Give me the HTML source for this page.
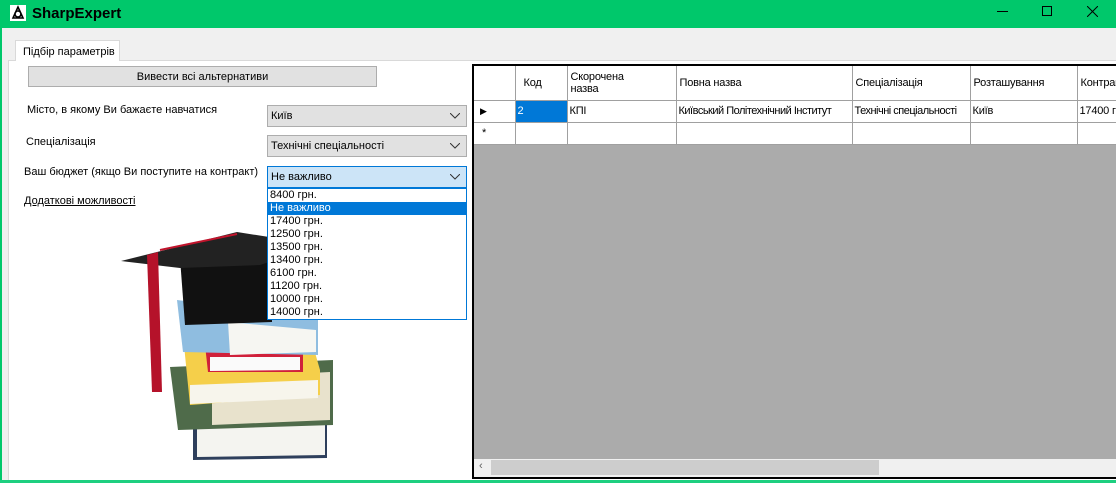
<!DOCTYPE html>
<html><head><meta charset="utf-8"><style>
*{margin:0;padding:0;box-sizing:border-box}
body{width:1116px;height:483px;overflow:hidden;background:#f0f0f0;font-family:"Liberation Sans","DejaVu Sans",sans-serif;font-size:11px;color:#000;position:relative}
.abs{position:absolute;white-space:nowrap}
.title{left:0;top:0;width:1116px;height:28px;background:#00c86b}
.combo{position:absolute;left:267px;width:200px;height:22px;background:#e1e1e1;border:1px solid #adadad;padding:4px 0 0 3px}
.combo svg{position:absolute;right:6px;top:7px}
.grid td{border-right:1px solid #a0a0a0;border-bottom:1px solid #a0a0a0;padding:0 3px;background:#fff;white-space:nowrap;overflow:hidden;vertical-align:middle;font-size:11px;letter-spacing:-0.2px}
.dd div{height:13px;line-height:13px;padding-left:2px}
</style></head><body>
<div class="abs title"></div>
<svg class="abs" style="left:10px;top:5px" width="16" height="16" viewBox="0 0 16 16"><rect width="16" height="16" fill="#fff"/><path d="M8 2 L3 13 H13 Z M8 6 A3 3 0 1 1 7.9 6" fill="none" stroke="#000" stroke-width="1.6"/></svg>
<div class="abs" style="left:32px;top:5px;font-weight:bold;font-size:15px">SharpExpert</div>
<div class="abs" style="left:997px;top:11px;width:11px;height:1px;background:#000"></div>
<div class="abs" style="left:1042px;top:6px;width:10px;height:10px;border:1px solid #000"></div>
<svg class="abs" style="left:1087px;top:6px" width="11" height="11"><path d="M0 0L11 11M11 0L0 11" stroke="#000"/></svg>
<div class="abs" style="left:0;top:28px;width:2px;height:455px;background:#00c86b"></div>
<div class="abs" style="left:0;top:480px;width:1116px;height:3px;background:#1ecf80"></div>
<div class="abs" style="left:8px;top:60px;width:1108px;height:420px;background:#fff;border-top:1px solid #d9d9d9;border-left:1px solid #d9d9d9"></div>
<div class="abs" style="left:15px;top:40px;width:105px;height:21px;background:#fff;border:1px solid #d9d9d9;border-bottom:none;padding:5px 0 0 7px">Підбір параметрів</div>
<div class="abs" style="left:28px;top:66px;width:349px;height:21px;background:#e1e1e1;border:1px solid #adadad;text-align:center;padding-top:4px">Вивести всі альтернативи</div>
<div class="abs" style="left:27px;top:104px">Місто, в якому Ви бажаєте навчатися</div>
<div class="abs" style="left:26px;top:136px">Спеціалізація</div>
<div class="abs" style="left:24px;top:166px">Ваш бюджет (якщо Ви поступите на контракт)</div>
<div class="abs" style="left:24px;top:195px;text-decoration:underline">Додаткові можливості</div>
<svg class="abs" style="left:100px;top:200px" width="260" height="280" viewBox="100 200 260 280">
<polygon points="193,415 327,415 327,458 193,460" fill="#2e3f5c"/><polygon points="197,425 325,422 325,455 197,457" fill="#f4f4f0"/>
<polygon points="170,367 333,360 333,425 178,430" fill="#4f6b4a"/><polygon points="212,378 330,372 330,420 212,425" fill="#e8e2cc"/>
<polygon points="183,335 310,335 320,370 320,395 190,405" fill="#f5cf4a"/><polygon points="190,385 318,380 318,398 190,404" fill="#f7f5ec"/>
<polygon points="205,345 303,345 303,372 208,372" fill="#d0203a"/><polygon points="210,357 300,357 300,370 210,371" fill="#fafafa"/>
<polygon points="177,300 318,318 318,355 183,352" fill="#8fbde0"/><polygon points="228,322 316,330 316,352 230,355" fill="#f6f6f2"/>
<polygon points="180,258 270,258 272,322 185,325" fill="#111"/>
<polygon points="121,261 237,232 320,245 260,265 180,268" fill="#222"/>
<path d="M237 234 L160 250" stroke="#c0142c" stroke-width="2"/>
<polygon points="147,255 158,252 162,392 152,392" fill="#b5122a"/>
</svg>
<div class="combo" style="top:105px">Київ<svg width="10" height="6"><path d="M0 0L5 5L10 0" fill="none" stroke="#333"/></svg></div>
<div class="combo" style="top:135px">Технічні спеціальності<svg width="10" height="6"><path d="M0 0L5 5L10 0" fill="none" stroke="#333"/></svg></div>
<div class="combo" style="top:166px;background:#cce4f7;border-color:#0078d7">Не важливо<svg width="10" height="6"><path d="M0 0L5 5L10 0" fill="none" stroke="#333"/></svg></div>
<div class="abs dd" style="left:267px;top:188px;width:200px;height:132px;background:#fff;border:1px solid #0078d7">
<div>8400 грн.</div><div style="background:#0078d7;color:#fff">Не важливо</div><div>17400 грн.</div><div>12500 грн.</div><div>13500 грн.</div><div>13400 грн.</div><div>6100 грн.</div><div>11200 грн.</div><div>10000 грн.</div><div>14000 грн.</div></div>
<div class="abs" style="left:472px;top:64px;width:650px;height:415px;background:#ababab;border:2px solid #000;overflow:hidden">
<table class="grid" style="border-collapse:collapse;table-layout:fixed;width:700px">
<colgroup><col style="width:41px"><col style="width:52px"><col style="width:109px"><col style="width:176px"><col style="width:118px"><col style="width:107px"><col style="width:97px"></colgroup>
<tr style="height:34px"><td></td><td style="padding-left:8px">Код</td><td style="line-height:12px">Скорочена<br>назва</td><td>Повна назва</td><td>Спеціалізація</td><td>Розташування</td><td>Контракт</td></tr>
<tr style="height:22px"><td style="font-size:9px;padding-left:6px">▶</td><td style="background:#0078d7;color:#fff;padding-left:2px">2</td><td style="padding-left:2px">КПІ</td><td style="padding-left:2px;letter-spacing:-0.5px">Київський Політехнічний Інститут</td><td style="padding-left:2px;letter-spacing:-0.5px">Технічні спеціальності</td><td style="padding-left:2px">Київ</td><td style="padding-left:2px">17400 грн.</td></tr>
<tr style="height:22px"><td style="padding-left:8px">*</td><td></td><td></td><td></td><td></td><td></td><td></td></tr>
</table>
<div class="abs" style="left:0;top:393px;width:646px;height:18px;background:#f0f0f0"></div>
<div class="abs" style="left:17px;top:394px;width:388px;height:15px;background:#cdcdcd"></div>
<div class="abs" style="left:5px;top:394px;color:#606060;font-size:11px">‹</div>
</div>
</body></html>
